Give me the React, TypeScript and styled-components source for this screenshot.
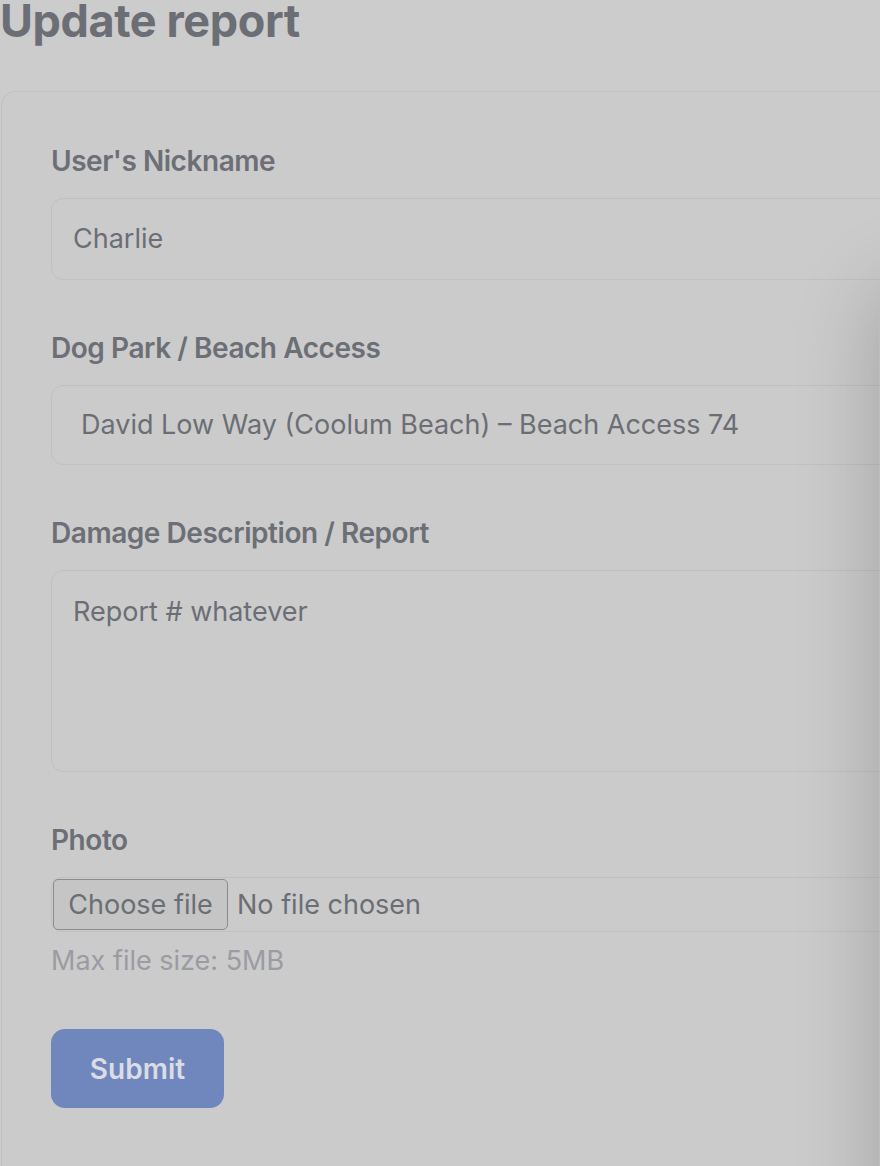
import React from "react";
import styled, { createGlobalStyle } from "styled-components";

const Global = createGlobalStyle`
  html, body {
    margin: 0;
    padding: 0;
    background: #cccccc;
    overflow: hidden;
  }
  body {
    font-family: Inter, "Noto Sans", Arial, sans-serif;
    -webkit-font-smoothing: antialiased;
  }
  * { box-sizing: border-box; }
`;

const Page = styled.div`
  width: 880px;
  height: 1166px;
  position: relative;
  overflow: hidden;
`;

const Heading = styled.h1`
  margin: 0;
  height: 91px;
  padding-top: 1px;
  font-size: 45px;
  line-height: 40px;
  font-weight: 700;
  color: #6b6e75;
  letter-spacing: -0.4px;
`;

const Card = styled.div`
  margin-left: 1px;
  width: 1100px;
  border: 1px solid #c1c1c3;
  border-radius: 14px;
  padding: 52px 0 200px 49px;
  display: flex;
  flex-direction: column;
  gap: 51px;
  background: #cbcbcb;
`;

const Field = styled.div`
  display: flex;
  flex-direction: column;
  gap: 20px;
  width: 1000px;
`;

const Label = styled.label`
  font-size: 28px;
  line-height: 34px;
  font-weight: 600;
  letter-spacing: -0.45px;
  color: #6c6f76;
`;

const Input = styled.div<{ $height: number; $pad: number }>`
  height: ${(p) => p.$height}px;
  border: 1px solid #bfc0c3;
  border-radius: 12px;
  padding-left: ${(p) => p.$pad}px;
  display: flex;
  align-items: center;
  font-size: 27px;
  line-height: 34px;
  color: #6b6e75;
  background: #cbcbcb;
`;

const TextArea = styled.div`
  height: 202px;
  border: 1px solid #bfc0c3;
  border-radius: 12px;
  padding: 24px 21px;
  font-size: 27px;
  line-height: 34px;
  color: #6b6e75;
  background: #cbcbcb;
`;

const FileGroup = styled.div`
  display: flex;
  flex-direction: column;
  gap: 12px;
`;

const FileBox = styled.div`
  height: 55px;
  border: 1px solid #bfc0c3;
  border-radius: 10px;
  padding: 1px;
  display: flex;
  align-items: center;
  gap: 9px;
  font-size: 27px;
  color: #6b6e75;
`;

const FileButton = styled.button`
  height: 51px;
  width: 175px;
  border: 1px solid #8c8c8e;
  border-radius: 5px;
  background: #c5c5c5;
  font-family: inherit;
  font-size: 27px;
  color: #6b6e75;
  padding: 0;
`;

const Help = styled.div`
  font-size: 27px;
  line-height: 34px;
  color: #9a9ca2;
`;

const Submit = styled.button`
  width: 173px;
  height: 79px;
  border: none;
  border-radius: 14px;
  background: #7087bd;
  color: #dadde4;
  font-family: inherit;
  font-size: 28px;
  font-weight: 600;
  padding: 0;
`;

const Drawer = styled.div`
  position: absolute;
  left: 879px;
  top: 290px;
  width: 400px;
  height: 1200px;
  background: #bdbdbd;
  border-top-left-radius: 20px;
  box-shadow: 0 0 80px 6px rgba(0, 0, 0, 0.18);
`;

export default function App() {
  return (
    <Page>
      <Global />
      <Heading>Update report</Heading>
      <Card>
        <Field>
          <Label>User's Nickname</Label>
          <Input $height={82} $pad={21}>Charlie</Input>
        </Field>
        <Field>
          <Label>Dog Park / Beach Access</Label>
          <Input $height={80} $pad={29}>
            David Low Way (Coolum Beach) – Beach Access 74
          </Input>
        </Field>
        <Field>
          <Label>Damage Description / Report</Label>
          <TextArea>Report # whatever</TextArea>
        </Field>
        <Field>
          <Label>Photo</Label>
          <FileGroup>
            <FileBox>
              <FileButton>Choose file</FileButton>
              <span>No file chosen</span>
            </FileBox>
            <Help>Max file size: 5MB</Help>
          </FileGroup>
        </Field>
        <div>
          <Submit>Submit</Submit>
        </div>
      </Card>
      <Drawer />
    </Page>
  );
}
